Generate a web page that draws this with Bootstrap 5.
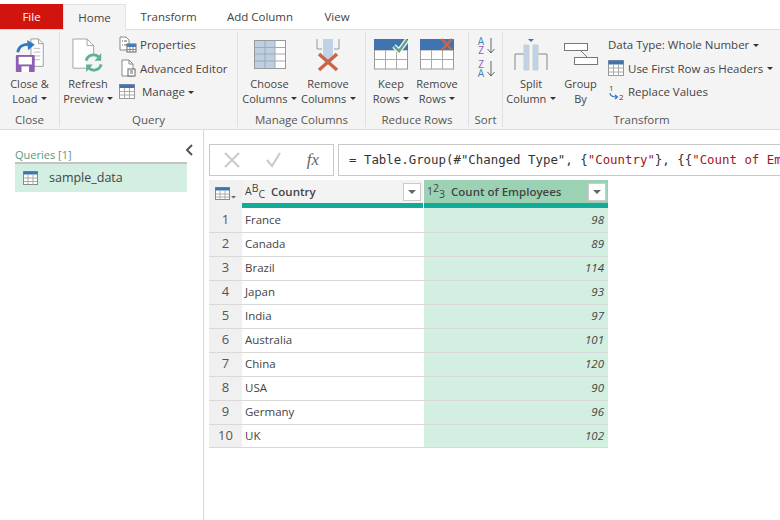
<!DOCTYPE html>
<html lang="en">
<head>
  <meta charset="UTF-8">
  <title>Power Query Editor</title>
  <link href="https://cdn.jsdelivr.net/npm/bootstrap@5.3.3/dist/css/bootstrap.min.css" rel="stylesheet">
  <style>
    html, body { height: 520px; overflow: hidden; }
    body { font-family: "Open Sans", "Noto Sans", sans-serif; font-size: 12px; color: #444; background: #fff; }

    /* tabs */
    .tab-strip { height: 30px; padding-top: 4px; border-bottom: 1px solid #dcdcdc; }
    .tab-strip .nav-link { height: 26px; padding: 4px 0 0; border: 0; border-radius: 0; color: #444; font-size: 11.5px; text-align: center; }
    .tab-file { width: 63px; }
    .tab-strip .tab-file .nav-link { background: #d2140f; color: #fff; height: 25px; }
    .tab-home { width: 63px; }
    .tab-strip .tab-home .nav-link { background: #f5f4f4; height: 26px; border: 1px solid #e2e2e2; border-bottom: 0; }
    .tab-tr { width: 85px; }
    .tab-add { width: 98px; }
    .tab-view { width: 56px; }

    /* ribbon */
    .ribbon { height: 100px; background: #f5f4f4; border-bottom: 1px solid #dcdcdc; padding-top: 2px; }
    .rb-group { height: 95px; border-right: 1px solid #e0e0e0; flex: none; }
    .g-close { width: 60px; }
    .g-query { width: 178px; }
    .g-cols { width: 128px; }
    .g-rows { width: 103px; }
    .g-sort { width: 34px; }
    .g-trans { flex: 1 1 auto; border-right: 0; }
    .rb-body { height: 81px; padding-top: 6px; }
    .rb-label { text-align: center; line-height: 14px; font-size: 11.5px; color: #555; }
    .big-btn { line-height: 14.5px; text-align: center; font-size: 11px; flex: none; white-space: nowrap; }
    .big-ico { height: 38px; display: flex; justify-content: center; align-items: flex-start; margin-bottom: 1px; }
    .big-ico.drop-2 { padding-top: 2px; }
    .small-stack { font-size: 11.5px; margin-top: -5px; white-space: nowrap; }
    .small-item { height: 23.5px; display: flex; align-items: center; gap: 3px; }
    .small-item svg { flex: none; }
    .dropdown-toggle::after { border-top-color: #333; border-top-width: .28em; border-right-width: .28em; border-left-width: .28em; margin-left: .3em; vertical-align: .2em; }
    .w-refresh { width: 56px; }
    .query-stack { margin-left: 3px; }
    .w-choose { width: 63px; margin-left: 0; }
    .w-rmcol { width: 54px; }
    .w-keep { width: 50px; }
    .w-rmrow { width: 42px; }
    .w-split { width: 56px; }
    .w-group { width: 43px; }
    .trans-stack { margin-left: 6px; }
    .trans-label { width: 277px; }
    .sort-body { padding-top: 5px; gap: 5px; }
    .sort-ico { display: flex; align-items: center; gap: 1px; }
    .sort-letters { font-size: 10px; line-height: 9px; width: 9px; text-align: center; }
    .let-a { color: #4a7fb5; display: block; }
    .let-z { color: #8e5fb0; display: block; }

    /* main */
    .main-area { height: 390px; }
    .query-pane { width: 204px; border-right: 1px solid #d6d6d6; padding: 17px 0 0 15px; flex: none; }
    .query-title { color: #5a9a7e; font-size: 11px; line-height: 16px; border-bottom: 2px solid #c4c4c4; height: 17px; width: 172px; flex: none; }
    .collapse-arrow { flex: none; margin: -4px 0 0 -3px; }
    .query-item { width: 172px; height: 28px; background: #d3efe1; color: #444; font-size: 12.5px; gap: 11px; padding: 0 0 0 8px; }

    .work-pane { padding: 14px 0 0 5px; min-width: 0; }
    .fx-box { width: 125px; height: 32px; border: 1px solid #c8c8c8; flex: none; padding: 0 14px 0 13px; }
    .fx-text { font-family: "Liberation Serif", serif; font-style: italic; font-size: 17px; color: #666; }
    .formula-box { height: 32px; margin-left: 4px; border: 1px solid #c8c8c8; border-right: 0; flex: 1 1 auto; padding-left: 10px; line-height: 30px; white-space: nowrap; overflow: hidden;
      font-family: "DejaVu Sans Mono", monospace; font-size: 12.4px; color: #333; }
    .str-lit { color: #a31515; }

    /* grid */
    .data-tbl { width: 399px; margin: 4px 0 0 0; table-layout: fixed; border-collapse: collapse; font-size: 11.5px; }
    .data-tbl > :not(caption) > * > * { padding: 0; border: 0; box-shadow: none; background: transparent; color: #444; }
    .data-tbl .c-num { width: 33px; }
    .data-tbl .c-country { width: 182px; }
    .data-tbl thead th { height: 28px; font-weight: 600; vertical-align: top; }
    .data-tbl tbody td { height: 24px; border-bottom: 1px solid #d9d9d9; vertical-align: middle; }
    .data-tbl tbody tr:last-child td { height: 23px; }
    .data-tbl .head-num { background: #f0f0f0; }
    .head-num-inner { height: 28px; }
    .head-inner { height: 28px; display: flex; align-items: center; border-bottom: 5px solid #12ab97; padding: 0 2px 0 3px; }
    .head-inner.col-a { background: #f3f3f3; margin-right: 1px; }
    .head-inner.col-b { background: #9bd2b4; }
    .head-name { flex: 1 1 auto; margin-left: 6px; color: #444; }
    .type-ico { font-size: 11px; line-height: 1; color: #444; font-weight: 400; white-space: nowrap; }
    .type-ico span { font-size: 10.5px; }
    .type-ico .up { vertical-align: 3px; }
    .type-ico .dn { vertical-align: -3px; }
    .filter-btn { width: 18px; height: 18px; background: #fff; border: 1px solid #ccc; display: flex; align-items: center; justify-content: center; flex: none; }
    .filter-btn i { display: block; width: 0; height: 0; border-left: 4px solid transparent; border-right: 4px solid transparent; border-top: 4px solid #666; }
    .data-tbl td.row-no { background: #f0f0f0; text-align: center; font-size: 13px; color: #555; }
    .data-tbl td.cell-name { padding-left: 3px; background: #fff; }
    .data-tbl td.cell-val { background: #d3efe1; text-align: right; font-style: italic; padding-right: 4px; }
  </style>
</head>
<body>

<!-- tabs -->
<ul class="nav tab-strip">
  <li class="nav-item tab-file"><a class="nav-link" href="#">File</a></li>
  <li class="nav-item tab-home"><a class="nav-link" href="#">Home</a></li>
  <li class="nav-item tab-tr"><a class="nav-link" href="#">Transform</a></li>
  <li class="nav-item tab-add"><a class="nav-link" href="#">Add Column</a></li>
  <li class="nav-item tab-view"><a class="nav-link" href="#">View</a></li>
</ul>

<!-- ribbon -->
<div class="ribbon d-flex">
  <div class="rb-group g-close">
    <div class="rb-body d-flex justify-content-center">
      <div class="big-btn">
        <div class="big-ico">
          <svg width="30" height="34" viewBox="0 0 30 36">
            <path d="M16 1h8l5 5v24h-13z" fill="#fff" stroke="#9a9a9a"/>
            <path d="M24 1v5h5" fill="none" stroke="#9a9a9a"/>
            <path d="M19 11h7M19 15h7M19 19h7M19 23h7" stroke="#b9b9b9"/>
            <path d="M2 15c1-6 6-9 13-8" fill="none" stroke="#2f78c4" stroke-width="3"/>
            <path d="M12 2l8 5-7 6z" fill="#2f78c4"/>
            <rect x="0" y="18" width="20" height="18" rx="1" fill="#8e5fb0"/>
            <rect x="3" y="20" width="14" height="8" fill="#fff"/>
            <rect x="6" y="30" width="8" height="6" fill="#fff"/>
          </svg>
        </div>
        Close &amp;<br><span class="dropdown-toggle">Load</span>
      </div>
    </div>
    <div class="rb-label">Close</div>
  </div>

  <div class="rb-group g-query">
    <div class="rb-body d-flex">
      <div class="big-btn w-refresh">
        <div class="big-ico">
          <svg width="32" height="34" viewBox="0 0 34 36">
            <path d="M1 1h15l7 7v24h-22z" fill="#fff" stroke="#a0a0a0"/>
            <path d="M16 1v7h7" fill="none" stroke="#a0a0a0"/>
            <circle cx="23" cy="26" r="9" fill="#f5f4f4"/>
            <path d="M15 24a8 8 0 0 1 14-3" fill="none" stroke="#62b096" stroke-width="3"/>
            <path d="M31 28a8 8 0 0 1-14 3" fill="none" stroke="#62b096" stroke-width="3"/>
            <path d="M31 16v8h-7z" fill="#62b096"/>
            <path d="M15 36v-8h7z" fill="#62b096"/>
          </svg>
        </div>
        Refresh<br><span class="dropdown-toggle">Preview</span>
      </div>
      <div class="small-stack query-stack">
        <div class="small-item">
          <svg width="18" height="17" viewBox="0 0 18 17"><path d="M1 1h6l3 3v10h-9z" fill="#fff" stroke="#888"/><path d="M3 5h1M3 9h1M5 5h3M5 9h3" stroke="#666"/><rect x="8" y="8" width="9" height="8" fill="#fff" stroke="#667"/><rect x="8" y="8" width="9" height="3" fill="#4a7fb5"/><path d="M11 11v5M14 11v5M8 13.500h9" stroke="#888"/></svg>
          <span>Properties</span>
        </div>
        <div class="small-item">
          <svg width="18" height="20" viewBox="0 0 18 20"><path d="M3 2h7l4 4v12h-11z" fill="#fff" stroke="#888"/><path d="M10 2v4h4" fill="none" stroke="#888"/><rect x="9" y="11" width="7" height="7" fill="#fff" stroke="#666"/><path d="M11 13h3M11 15h3" stroke="#666"/></svg>
          <span>Advanced Editor</span>
        </div>
        <div class="small-item">
          <svg width="16" height="16" viewBox="0 0 16 16"><rect x=".5" y=".5" width="15" height="14" fill="#fff" stroke="#999"/><rect x=".5" y=".5" width="15" height="3.500" fill="#3f74b0"/><path d="M5.500 4v11M10.500 4v11M1 7.500h14M1 11h14" stroke="#aaa"/></svg>
          <span class="dropdown-toggle ms-1">Manage</span>
        </div>
      </div>
    </div>
    <div class="rb-label">Query</div>
  </div>

  <div class="rb-group g-cols">
    <div class="rb-body d-flex">
      <div class="big-btn w-choose">
        <div class="big-ico drop-2">
          <svg width="32" height="30" viewBox="0 0 32 30"><rect x=".5" y=".5" width="31" height="28" fill="#fff" stroke="#999"/><rect x="1" y="1" width="20" height="27" fill="#bccfe3"/><path d="M11 1v27M21 1v27M1 7.500h30M1 14h30M1 21h30" stroke="#a8a8a8"/></svg>
        </div>
        Choose<br><span class="dropdown-toggle">Columns</span>
      </div>
      <div class="big-btn w-rmcol">
        <div class="big-ico">
          <svg width="24" height="34" viewBox="0 0 24 34"><path d="M1 1v10h5M23 1v10h-5" fill="none" stroke="#999"/><path d="M7 1h10v16l-5 6-5-6z" fill="#bed3e8"/><path d="M3 16l18 16M21 16l-18 16" stroke="#c9664a" stroke-width="3.500"/></svg>
        </div>
        Remove<br><span class="dropdown-toggle">Columns</span>
      </div>
    </div>
    <div class="rb-label">Manage Columns</div>
  </div>

  <div class="rb-group g-rows">
    <div class="rb-body d-flex">
      <div class="big-btn w-keep">
        <div class="big-ico">
          <svg width="34" height="32" viewBox="0 0 34 32"><rect x=".5" y="12" width="33" height="19" fill="#fff" stroke="#999"/><rect x="0" y="1" width="34" height="11" fill="#3f74b0"/><path d="M11.500 12v19M22.500 12v19M1 21.500h32" stroke="#aaa"/><path d="M20 8l5 5 8-11" fill="none" stroke="#f5f4f4" stroke-width="5"/><path d="M20 8l5 5 8-11" fill="none" stroke="#6aa58f" stroke-width="2.500"/></svg>
        </div>
        Keep<br><span class="dropdown-toggle">Rows</span>
      </div>
      <div class="big-btn w-rmrow">
        <div class="big-ico">
          <svg width="34" height="32" viewBox="0 0 34 32"><rect x=".5" y="12" width="33" height="19" fill="#fff" stroke="#999"/><rect x="0" y="1" width="34" height="11" fill="#3f74b0"/><path d="M11.500 12v19M22.500 12v19M1 21.500h32" stroke="#aaa"/><path d="M22 1l10 11M32 1l-10 11" stroke="#c9664a" stroke-width="2.500"/></svg>
        </div>
        Remove<br><span class="dropdown-toggle">Rows</span>
      </div>
    </div>
    <div class="rb-label">Reduce Rows</div>
  </div>

  <div class="rb-group g-sort">
    <div class="rb-body sort-body d-flex flex-column align-items-center">
      <div class="sort-ico">
        <div class="sort-letters"><span class="let-a">A</span><span class="let-z">Z</span></div>
        <svg width="8" height="18" viewBox="0 0 8 18"><path d="M4 1v15M.5 12l3.500 4 3.500-4" fill="none" stroke="#666"/></svg>
      </div>
      <div class="sort-ico">
        <div class="sort-letters"><span class="let-z">Z</span><span class="let-a">A</span></div>
        <svg width="8" height="18" viewBox="0 0 8 18"><path d="M4 1v15M.5 12l3.500 4 3.500-4" fill="none" stroke="#666"/></svg>
      </div>
    </div>
    <div class="rb-label">Sort</div>
  </div>

  <div class="rb-group g-trans">
    <div class="rb-body d-flex">
      <div class="big-btn w-split">
        <div class="big-ico">
          <svg width="34" height="34" viewBox="0 0 34 34"><path d="M14 1h6l-3 3z" fill="#3f74b0"/><path d="M1 32v-16h9M33 32v-16h-9" fill="none" stroke="#888"/><path d="M10 32v-25h5v25zM19 32v-25h5v25z" fill="#bed3e8" stroke="#ccc"/></svg>
        </div>
        Split<br><span class="dropdown-toggle">Column</span>
      </div>
      <div class="big-btn w-group">
        <div class="big-ico">
          <svg width="34" height="30" viewBox="0 0 34 30"><rect x=".5" y="5.500" width="23" height="7" fill="#fff" stroke="#777"/><rect x="10.500" y="19.500" width="23" height="7" fill="#fff" stroke="#777"/><path d="M17 13l6 6" stroke="#777"/></svg>
        </div>
        Group<br>By
      </div>
      <div class="small-stack trans-stack">
        <div class="small-item"><span class="dropdown-toggle">Data Type: Whole Number</span></div>
        <div class="small-item">
          <svg width="17" height="16" viewBox="0 0 17 16"><rect x=".5" y=".5" width="15" height="15" fill="#fff" stroke="#999"/><rect x=".5" y=".5" width="15" height="4" fill="#3f74b0"/><path d="M5.500 4v12M10.500 4v12M1 8h14M1 12h14" stroke="#aaa"/></svg>
          <span class="dropdown-toggle">Use First Row as Headers</span>
        </div>
        <div class="small-item">
          <svg width="17" height="20" viewBox="0 -2 17 20"><text x="1" y="7" font-size="8" fill="#444" font-family="Open Sans">1</text><text x="11" y="16" font-size="8" fill="#444" font-family="Open Sans">2</text><path d="M2 9c0 3 2 4 7 4M7 11l2.500 2-2.500 2" fill="none" stroke="#2f78c4" stroke-width="1.200"/></svg>
          <span>Replace Values</span>
        </div>
      </div>
    </div>
    <div class="rb-label trans-label">Transform</div>
  </div>
</div>

<!-- query pane + grid -->
<div class="main-area d-flex">
  <div class="query-pane">
    <div class="d-flex">
      <div class="query-title">Queries [1]</div>
      <svg class="collapse-arrow" width="10" height="14" viewBox="0 0 10 14"><path d="M8 2l-5 5 5 5" fill="none" stroke="#555" stroke-width="2"/></svg>
    </div>
    <div class="query-item d-flex align-items-center">
      <svg width="15" height="14" viewBox="0 0 15 14"><rect x=".5" y=".5" width="14" height="13" fill="#fff" stroke="#8a8a8a"/><rect x=".5" y=".5" width="14" height="3" fill="#3f74b0"/><path d="M5 3.500v10M10 3.500v10M1 7h13M1 10.500h13" stroke="#aaa"/></svg>
      <span>sample_data</span>
    </div>
  </div>

  <div class="work-pane flex-grow-1">
    <div class="d-flex">
      <div class="fx-box d-flex align-items-center justify-content-between">
        <svg width="18" height="18" viewBox="0 0 18 18"><path d="M2 2l14 14M16 2l-14 14" stroke="#c9c9c9" stroke-width="2"/></svg>
        <svg width="17" height="16" viewBox="0 0 17 16"><path d="M2 8l5 6 8-13" fill="none" stroke="#c9c9c9" stroke-width="2"/></svg>
        <span class="fx-text">fx</span>
      </div>
      <div class="formula-box">= Table.Group(#"Changed Type", {<span class="str-lit">"Country"</span>}, {{<span class="str-lit">"Count of Employees"</span>, each Table.RowCount(_), Int64.Type}})</div>
    </div>

    <table class="table data-tbl">
      <thead>
        <tr>
          <th class="c-num head-num">
            <div class="head-num-inner d-flex align-items-center justify-content-center">
              <svg width="22" height="14" viewBox="0 0 22 14"><rect x=".5" y=".5" width="14" height="12" fill="#fff" stroke="#888"/><rect x=".5" y=".5" width="14" height="3" fill="#3f74b0"/><path d="M5 3.500v9M10 3.500v9M1 7h13M1 10h13" stroke="#aaa"/><path d="M16 9h5l-2.500 2.500z" fill="#666"/></svg>
            </div>
          </th>
          <th class="c-country">
            <div class="head-inner col-a">
              <span class="type-ico"><span>A</span><span class="up">B</span><span class="dn">C</span></span>
              <span class="head-name">Country</span>
              <span class="filter-btn"><i></i></span>
            </div>
          </th>
          <th>
            <div class="head-inner col-b">
              <span class="type-ico"><span>1</span><span class="up">2</span><span class="dn">3</span></span>
              <span class="head-name">Count of Employees</span>
              <span class="filter-btn"><i></i></span>
            </div>
          </th>
        </tr>
      </thead>
      <tbody id="rows"></tbody>
    </table>
  </div>
</div>

<script src="https://cdn.jsdelivr.net/npm/bootstrap@5.3.3/dist/js/bootstrap.bundle.min.js"></script>
<script>
const data = [["France",98],["Canada",89],["Brazil",114],["Japan",93],["India",97],["Australia",101],["China",120],["USA",90],["Germany",96],["UK",102]];
document.getElementById("rows").innerHTML = data.map((d, i) =>
  `<tr><td class="row-no">${i + 1}</td><td class="cell-name">${d[0]}</td><td class="cell-val">${d[1]}</td></tr>`).join("");
</script>
</body>
</html>
